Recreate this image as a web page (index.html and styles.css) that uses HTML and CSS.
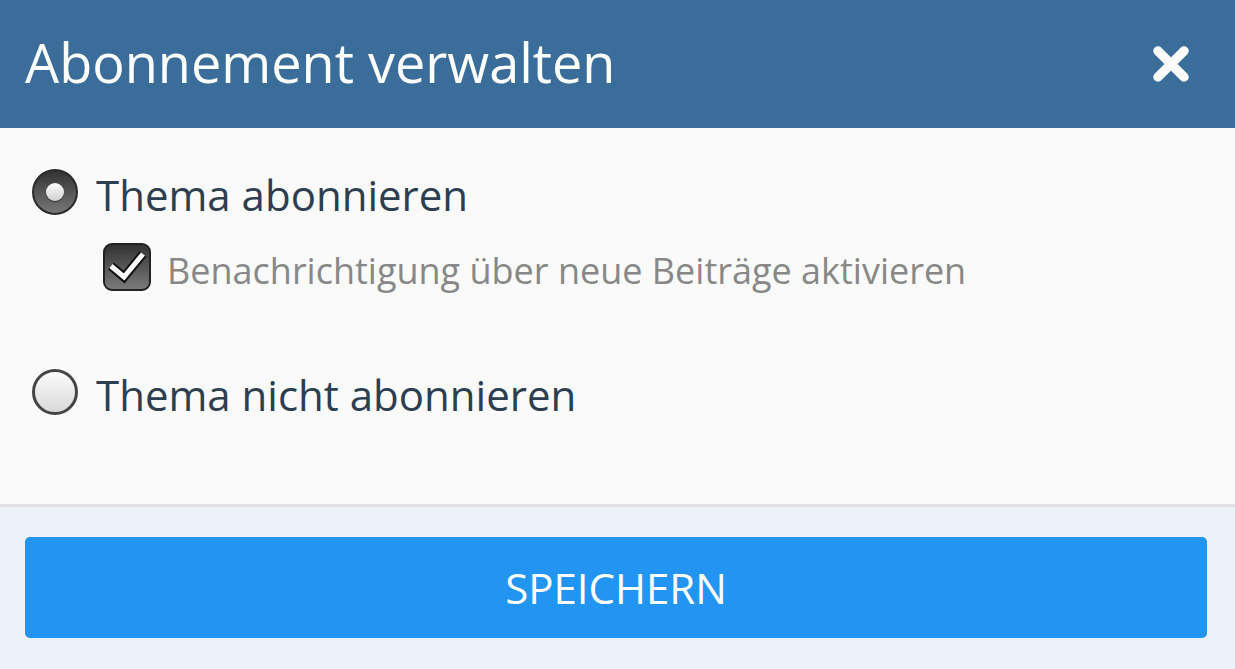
FILE: index.html
```html
<!DOCTYPE html>
<html lang="de">
<head>
    <meta charset="UTF-8">
    <meta name="viewport" content="width=device-width, initial-scale=1.0">
    <title>Abonnement verwalten</title>
    <link rel="stylesheet" href="styles.css">
</head>
<body>

    <div class="dialog">
        <div class="dialog-header">
            <h1>Abonnement verwalten</h1>
            <button class="close-btn" aria-label="Schließen">
                <svg width="40" height="40" viewBox="0 0 40 40">
                    <path d="M7 7 L33 33 M33 7 L7 33" stroke="#fff" stroke-width="9.5" stroke-linecap="round" fill="none"/>
                </svg>
            </button>
        </div>

        <div class="dialog-body">
            <label class="option">
                <span class="radio checked"><span class="dot"></span></span>
                <span class="option-text">Thema abonnieren</span>
            </label>

            <label class="sub-option">
                <span class="checkbox">
                    <svg width="43" height="43" viewBox="0 0 43 43">
                        <path d="M5 20 L18 31 L37 8" stroke="#111" stroke-width="9" stroke-linejoin="miter" fill="none"/>
                        <path d="M5 20 L18 31 L37 8" stroke="#fff" stroke-width="5" stroke-linejoin="miter" fill="none"/>
                    </svg>
                </span>
                <span class="sub-text">Benachrichtigung über neue Beiträge aktivieren</span>
            </label>

            <label class="option second">
                <span class="radio"></span>
                <span class="option-text">Thema nicht abonnieren</span>
            </label>
        </div>

        <div class="dialog-footer">
            <button class="save-btn">SPEICHERN</button>
        </div>
    </div>

</body>
</html>
```

FILE: styles.css
```css
/* --- base --- */
body {
    margin: 0;
    font-family: 'Open Sans', 'Noto Sans', sans-serif;
    background: #fafafa;
    color: #2c3e50;
}

.dialog {
    width: 1235px;
    height: 669px;
    display: flex;
    flex-direction: column;
}

/* --- header --- */
.dialog-header {
    height: 128px;
    background-color: #3b6d9b;
    display: flex;
    align-items: center;
    justify-content: space-between;
    padding: 0 44px 4px 25px;
    box-sizing: border-box;
}

.dialog-header h1 {
    margin: 0;
    font-size: 54px;
    font-weight: 400;
    color: #fff;
    line-height: 1;
}

.close-btn {
    border: none;
    background: transparent;
    padding: 4px 0 0 0;
    display: flex;
    cursor: pointer;
}

/* --- body --- */
.dialog-body {
    height: 376px;
    background-color: #fafafa;
    padding: 40px 0 0 32px;
    box-sizing: border-box;
    display: flex;
    flex-direction: column;
}

.option {
    display: flex;
    align-items: center;
    gap: 18px;
    height: 48px;
}

.option.second {
    margin-top: 77px;
}

.option-text {
    font-size: 42px;
    line-height: 1;
    color: #2c3e50;
    padding-top: 6px;
}

.radio {
    width: 46px;
    height: 46px;
    border-radius: 50%;
    box-sizing: border-box;
    border: 3px solid #444;
    background: linear-gradient(#fbfbfb, #d9d9d9);
    display: flex;
    align-items: center;
    justify-content: center;
    flex-shrink: 0;
}

.radio.checked {
    border: 2px solid #2a2a2a;
    background: linear-gradient(#333, #777);
}

.radio .dot {
    width: 18px;
    height: 18px;
    border-radius: 50%;
    background: linear-gradient(#fff, #cfcfcf);
    box-shadow: 0 1px 1px rgba(0,0,0,0.5);
}

.sub-option {
    display: flex;
    align-items: center;
    gap: 16px;
    margin: 27px 0 0 71px;
}

.checkbox {
    width: 48px;
    height: 48px;
    box-sizing: border-box;
    border: 2px solid #222;
    border-radius: 9px;
    background: linear-gradient(#333, #7a7a7a);
    display: flex;
    align-items: center;
    justify-content: center;
    flex-shrink: 0;
}

.sub-text {
    font-size: 36px;
    color: #888;
    line-height: 1;
    padding-top: 8px;
}

/* --- footer --- */
.dialog-footer {
    flex: 1;
    background-color: #ecf0f7;
    border-top: 3px solid #e0e0e0;
    padding: 30px 28px 0 25px;
}

.save-btn {
    width: 100%;
    height: 101px;
    border: none;
    border-radius: 5px;
    background-color: #2294f1;
    color: #fff;
    font-family: 'Open Sans', 'Noto Sans', sans-serif;
    font-size: 42px;
    cursor: pointer;
}
```
